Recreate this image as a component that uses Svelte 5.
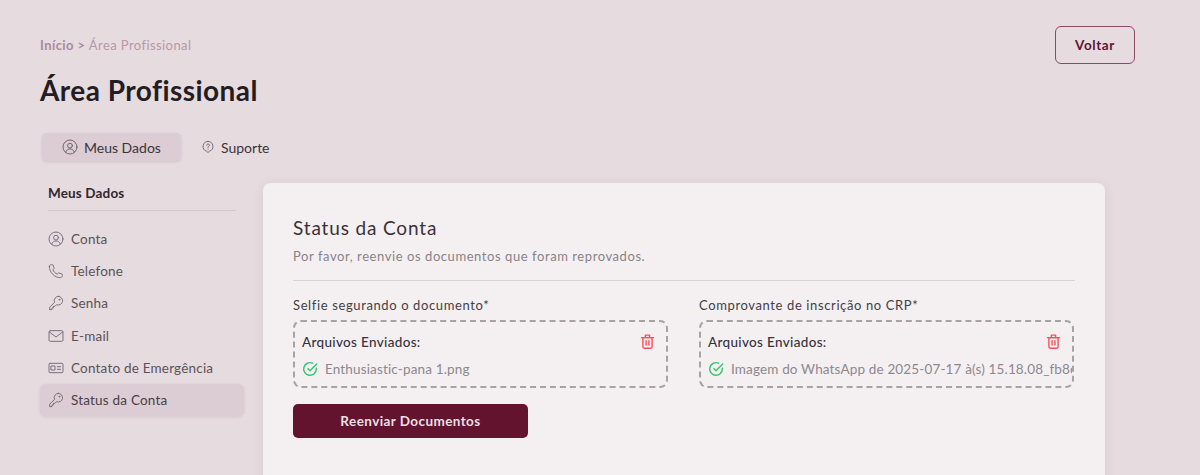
<script>
  const menu = [
    { label: 'Conta', icon: 'user' },
    { label: 'Telefone', icon: 'phone' },
    { label: 'Senha', icon: 'key' },
    { label: 'E-mail', icon: 'mail' },
    { label: 'Contato de Emergência', icon: 'card' },
    { label: 'Status da Conta', icon: 'key', active: true }
  ];

  const uploads = [
    { title: 'Selfie segurando o documento*', file: 'Enthusiastic-pana 1.png' },
    { title: 'Comprovante de inscrição no CRP*', file: 'Imagem do WhatsApp de 2025-07-17 à(s) 15.18.08_fb8c4a1e.jpg' }
  ];
</script>

{#snippet icon(name, size, weight = 1.6)}
  <svg width={size} height={size} viewBox="0 0 24 24" fill="none" stroke="currentColor" stroke-width={weight} stroke-linecap="round" stroke-linejoin="round">
    {#if name === 'user'}
      <circle cx="12" cy="12" r="10.500" />
      <circle cx="12" cy="10" r="3.600" />
      <path d="M5.600 19.500c1-3 3.500-4.600 6.400-4.600s5.400 1.600 6.400 4.600" />
    {:else if name === 'phone'}
      <path d="M2 5.500C2 3.800 3.300 2.500 5 2.500h1.500c.6 0 1.100.4 1.300 1l1.200 4c.2.500 0 1-.4 1.400L7.300 10.200c1.400 3 3.500 5.100 6.500 6.500l1.300-1.300c.4-.4.900-.6 1.400-.4l4 1.200c.6.200 1 .7 1 1.300V19c0 1.700-1.300 3-3 3C10 22 2 14 2 5.500z" />
    {:else if name === 'key'}
      <path d="M15.500 2a6.500 6.500 0 1 1-2.600 12.500L10.500 17H8.200v2.300H6V22H2.500v-3.700l7.300-7.100A6.500 6.500 0 0 1 15.500 2z" />
      <circle cx="17" cy="7" r=".7" />
    {:else if name === 'mail'}
      <rect x="1.500" y="4" width="21" height="16" rx="2" />
      <path d="M2 6l10 7.500L22 6" />
    {:else if name === 'card'}
      <rect x="1.500" y="5" width="21" height="14" rx="1.500" />
      <rect x="5" y="9" width="5.500" height="6" />
      <path d="M14 10h5M14 14h5" />
    {:else if name === 'help'}
      <path d="M12 2.500a8.500 8.500 0 0 1 2.500 16.600L12 21.500l-2.500-2.400A8.500 8.500 0 0 1 12 2.500z" />
      <path d="M9.800 9a2.300 2.300 0 1 1 3.400 2c-.8.400-1.200.9-1.200 1.700" />
      <path d="M12 15.600v.1" />
    {:else if name === 'check'}
      <path d="M21.500 11v1a9.500 9.500 0 1 1-5.600-8.700" />
      <path d="M22 4.500 12 14.500l-3-3" />
    {:else if name === 'trash'}
      <path d="M3.500 6.500h17M9 6.500V3h6v3.500" />
      <path d="M5.500 6.500h13V19.500a2 2 0 0 1-2 2h-9a2 2 0 0 1-2-2z" />
      <path d="M10 11v6M14 11v6" />
    {/if}
  </svg>
{/snippet}

<div class="page">
  <header class="top">
    <div class="heading">
      <div class="crumbs"><b>Início &gt;</b> Área Profissional</div>
      <h1>Área Profissional</h1>
    </div>
    <button class="back">Voltar</button>
  </header>

  <nav class="tabs">
    <div class="tab selected">{@render icon('user', 16, 1.5)}Meus Dados</div>
    <div class="tab second">{@render icon('help', 14, 1.6)}Suporte</div>
  </nav>

  <div class="body">
    <aside class="side">
      <h2>Meus Dados</h2>
      <ul>
        {#each menu as item}
          <li class:active={item.active}>{@render icon(item.icon, 16, 1.5)}{item.label}</li>
        {/each}
      </ul>
    </aside>

    <main class="card">
      <h3>Status da Conta</h3>
      <p class="lead">Por favor, reenvie os documentos que foram reprovados.</p>
      <div class="uploads">
        {#each uploads as up}
          <section>
            <div class="label">{up.title}</div>
            <div class="box">
              <div class="box-head">
                <span>Arquivos Enviados:</span>
                <span class="trash">{@render icon('trash', 17, 2)}</span>
              </div>
              <div class="file">
                <span class="ok">{@render icon('check', 16, 2.200)}</span>
                <span class="name">{up.file}</span>
              </div>
            </div>
          </section>
        {/each}
      </div>
      <button class="send">Reenviar Documentos</button>
    </main>
  </div>
</div>

<style>
  :global(body) {
    margin: 0;
    background: #e6dbdf;
    overflow: hidden;
  }

  .page {
    height: 475px;
    overflow: hidden;
    padding: 26px 95px 0 40px;
    box-sizing: border-box;
    font-family: "Lato", "Noto Sans", sans-serif;
    color: #4a4248;
  }

  .top {
    display: flex;
    justify-content: space-between;
    align-items: flex-start;
    margin-right: -30px;
  }

  .crumbs {
    margin-top: 11px;
    font-size: 13px;
    line-height: 16px;
    letter-spacing: 0.42px;
    color: #b798a8;
  }

  .crumbs b {
    font-weight: 700;
    color: #ab8a9c;
  }

  h1 {
    margin: 20px 0 0;
    font-size: 28px;
    line-height: 34px;
    font-weight: 700;
    letter-spacing: 0.45px;
    color: #231c22;
  }

  .back {
    width: 80px;
    height: 38px;
    background: transparent;
    border: 1.5px solid #8a4a64;
    border-radius: 6px;
    font: 700 13.5px "Lato", sans-serif;
    letter-spacing: 0.6px;
    color: #5f1430;
  }

  .tabs {
    display: flex;
    margin: 26px 0 0 2px;
  }

  .tab {
    display: flex;
    align-items: center;
    gap: 6px;
    height: 28px;
    font-size: 14px;
    color: #3c343b;
    border-radius: 5px;
  }

  .tab :global(svg) {
    color: #6f666d;
  }

  .selected {
    width: 139px;
    box-sizing: border-box;
    padding-left: 20px;
    background: #dbcdd3;
    box-shadow: 0 1px 3px rgba(90, 60, 75, 0.15);
  }

  .second {
    margin-left: 20px;
  }

  .body {
    display: flex;
    align-items: flex-start;
    gap: 19px;
    margin-top: 22px;
  }

  .side {
    width: 204px;
    flex: none;
  }

  .side h2 {
    margin: 0 8px;
    padding: 2px 0 8px;
    font-size: 13.5px;
    line-height: 17px;
    font-weight: 700;
    letter-spacing: 0.15px;
    color: #2f272d;
    border-bottom: 1px solid #d3c8cd;
  }

  ul {
    list-style: none;
    margin: 12px 0 0;
    padding: 0;
  }

  li {
    display: flex;
    align-items: center;
    gap: 7px;
    height: 32.2px;
    padding-left: 8px;
    font-size: 13.500px;
    letter-spacing: 0.2px;
    color: #5c5259;
    border-radius: 6px;
  }

  li :global(svg) {
    color: #7a7076;
  }

  li.active {
    background: #dbcdd3;
    color: #4a4047;
    box-shadow: 0 1px 3px rgba(90, 60, 75, 0.12);
  }

  .card {
    flex: 1;
    height: 320px;
    box-sizing: border-box;
    padding: 33px 30px 0;
    background: #f4f0f2;
    border-radius: 8px;
    box-shadow: 0 2px 12px rgba(90, 60, 75, 0.1);
  }

  h3 {
    margin: 0;
    font-size: 19px;
    line-height: 24px;
    font-weight: 400;
    letter-spacing: 0.85px;
    color: #3a3238;
  }

  .lead {
    margin: 7px 0 0;
    padding-bottom: 15px;
    font-size: 13px;
    line-height: 18px;
    letter-spacing: 0.57px;
    color: #8a8288;
    border-bottom: 1px solid #d9d3d6;
  }

  .uploads {
    display: grid;
    grid-template-columns: 375px 375px;
    gap: 31px;
    margin-top: 16px;
  }

  section {
    min-width: 0;
  }

  .label {
    font-size: 13px;
    line-height: 17px;
    letter-spacing: 0.62px;
    color: #453d43;
  }

  .box {
    margin-top: 6px;
    height: 68px;
    box-sizing: border-box;
    padding: 11px 0 0 7px;
    border: 2px dashed #a8a2a6;
    border-radius: 8px;
  }

  .box-head {
    display: flex;
    justify-content: space-between;
    align-items: center;
    padding-right: 10px;
    font-size: 13.5px;
    font-weight: 500;
    letter-spacing: 0.33px;
    color: #37323c;
  }

  .trash {
    display: flex;
    color: #f4515b;
  }

  .file {
    display: flex;
    align-items: center;
    gap: 7px;
    margin-top: 11px;
    font-size: 13.5px;
    letter-spacing: 0.15px;
    color: #8d878e;
  }

  .ok {
    display: flex;
    flex: none;
    color: #34c76f;
  }

  .name {
    white-space: nowrap;
    overflow: hidden;
  }

  .send {
    display: block;
    width: 235px;
    height: 34px;
    margin-top: 16px;
    background: #63132e;
    border: none;
    border-radius: 5px;
    font: 700 13.5px "Lato", sans-serif;
    letter-spacing: 0.42px;
    color: #ecdfe4;
  }
</style>
